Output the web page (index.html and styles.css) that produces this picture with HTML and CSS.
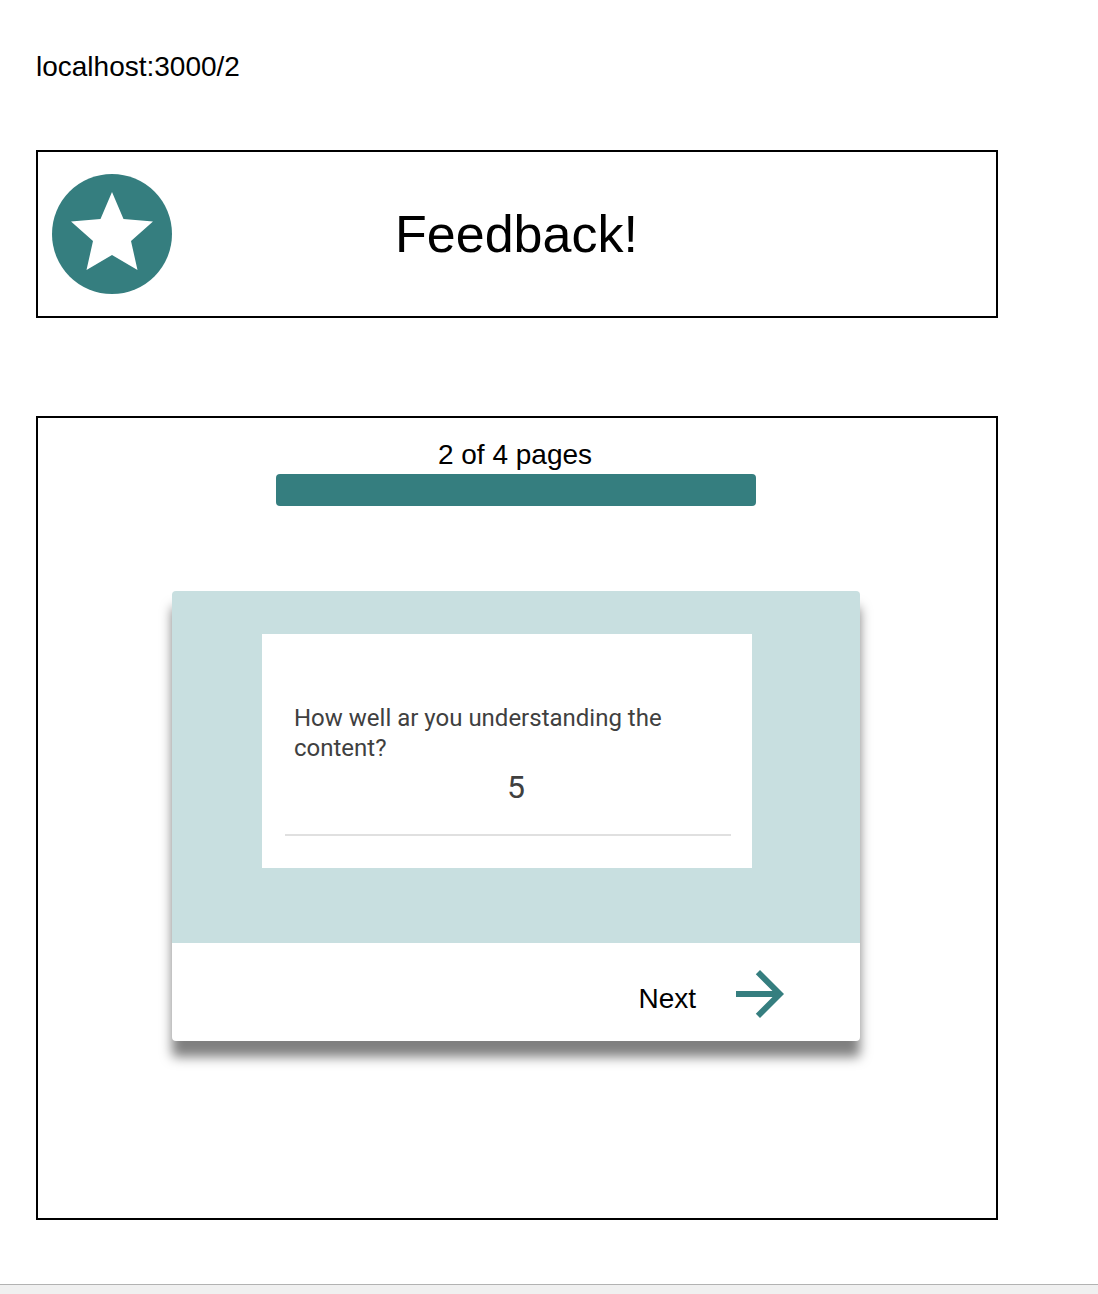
FILE: index.html
```html
<!DOCTYPE html>
<html lang="en">
<head>
<meta charset="utf-8">
<title>Feedback!</title>
<link rel="stylesheet" href="styles.css">
</head>
<body>
<main class="page">
  <p class="address">localhost:3000/2</p>
  <header class="banner">
    <svg class="badge" viewBox="0 0 120 120" aria-hidden="true">
      <circle cx="60" cy="60" r="60"/>
      <path class="star" d="M60 18 71.500 45 101 47.500 79 67 85.500 96 60 81 34.500 96 41 67 19 47.500 48.500 45Z"/>
    </svg>
    <h1 class="title">Feedback!</h1>
  </header>
  <section class="survey">
    <p class="count">2 of 4 pages</p>
    <div class="progress"></div>
    <div class="card">
      <div class="media">
        <div class="question">
          <p class="prompt">How well ar you understanding the content?</p>
          <div class="answer">5</div>
        </div>
      </div>
      <div class="actions">
        <span class="next">Next</span>
        <svg class="arrow" viewBox="0 0 48 48" aria-hidden="true">
          <path d="M24 0 19.800 4.200 36.500 21H0v6h36.500L19.800 43.800 24 48 48 24Z"/>
        </svg>
      </div>
    </div>
  </section>
</main>
<footer class="status"></footer>
</body>
</html>
```
FILE: styles.css
```css
* { box-sizing: border-box; }
body {
  margin: 0;
  height: 1294px;
  display: flex;
  flex-direction: column;
  justify-content: space-between;
  background: #fff;
  color: #000;
  font: 28px/32px "Liberation Sans", Arial, sans-serif;
}
p, h1 { margin: 0; }
.page { width: 962px; margin-left: 36px; padding-top: 51px; }
.address { height: 99px; }
.banner {
  height: 168px;
  padding: 0 14px;
  border: 2px solid #000;
  display: grid;
  grid-template-columns: 120px 1fr 120px;
  align-items: center;
}
.badge { width: 120px; height: 120px; fill: #357e7f; }
.badge .star { fill: #fff; }
.title { padding-right: 1px; font-size: 52px; line-height: 60px; font-weight: 400; text-align: center; }
.survey {
  height: 804px;
  margin-top: 98px;
  padding-top: 21px;
  border: 2px solid #000;
  display: flex;
  flex-direction: column;
  align-items: center;
}
.count { height: 35px; margin-right: 4px; }
.progress { width: 480px; height: 32px; margin-right: 2px; border-radius: 4px; background: #357e7f; }
.card {
  width: 688px;
  height: 450px;
  margin-top: 85px;
  margin-right: 2px;
  border-radius: 4px;
  background: #fff;
  box-shadow: 0 16px 12px rgba(0, 0, 0, .5);
}
.media { height: 352px; padding: 43px 108px 0 90px; border-radius: 4px 4px 0 0; background: #c8dfe0; }
.question { height: 234px; padding: 69px 21px 0 23px; background: #fff; font-family: Roboto, sans-serif; color: #404040; }
.prompt { padding: 0 9px; font-size: 24px; line-height: 30px; }
.answer { height: 73px; padding: 4px 0 0 16px; border-bottom: 2px solid #e0e0e0; font-size: 32px; line-height: 40px; text-align: center; }
.actions { height: 98px; padding: 27px 76px 0 0; display: flex; justify-content: flex-end; gap: 40px; }
.next { padding-top: 13px; }
.arrow { width: 48px; height: 48px; fill: #357e7f; }
.status { height: 10px; border-top: 1px solid #b2b2b2; background: #f0f0f0; }
```
